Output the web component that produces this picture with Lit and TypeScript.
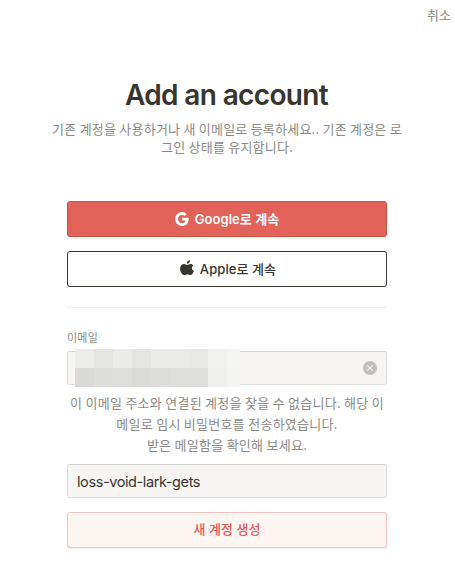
import { LitElement, html, css } from "lit";
import { customElement } from "lit/decorators.js";

const MOSAIC = [
  ["#ececeb", "#e5e5e4", "#ebebea", "#e4e4e3", "#eaeae9", "#eaeae9", "#e8e8e7", "#f0f0ef", "#f5f5f4"],
  ["#d9d9d8", "#dddddc", "#dededd", "#dadad9", "#dcdcdb", "#dededd", "#dededd", "#efefee", "#f4f4f3"],
];

@customElement("app-root")
export class AppRoot extends LitElement {
  static styles = css`
    :host {
      display: block;
      position: relative;
      width: 455px;
      height: 564px;
      overflow: hidden;
      background: #fff;
      color: #37352f;
      font-family: Inter, "Noto Sans CJK KR", sans-serif;
    }
    * { box-sizing: border-box; }
    header {
      height: 32px;
      padding-right: 4px;
      text-align: right;
      font: 13px/30px "Noto Sans CJK KR", sans-serif;
      color: #8b8a86;
    }
    h1 {
      margin: 45px 0 0;
      padding-right: 2px;
      font-size: 28px;
      line-height: 36px;
      font-weight: 600;
      letter-spacing: -0.65px;
      text-align: center;
      white-space: nowrap;
    }
    .copy {
      margin: 7px 0 0;
      padding-right: 1px;
      text-align: center;
      font: 13px/18px "Noto Sans CJK KR", sans-serif;
      letter-spacing: 0.23px;
      color: #8b8a86;
    }
    .copy span { display: block; white-space: nowrap; }
    main {
      width: 320px;
      margin: 45px 0 0 67px;
      display: flex;
      flex-direction: column;
    }
    .button {
      height: 36px;
      padding: 0 0 2px;
      border: 1px solid #37352f;
      border-radius: 3px;
      background: #fff;
      color: #37352f;
      font-family: inherit;
      font-size: 13px;
      font-weight: 500;
      letter-spacing: 0.05px;
      display: flex;
      align-items: center;
      justify-content: center;
      gap: 6px;
      white-space: nowrap;
    }
    .button svg { margin-top: 2px; }
    .google {
      background: #e16259;
      border-color: #be5643;
      color: #fff;
      font-weight: 600;
      box-shadow: 0 1px 2px rgba(15, 15, 15, 0.1);
    }
    .apple { margin-top: 14px; padding-left: 2px; letter-spacing: 0.08px; }
    .apple svg { margin-top: 0; }
    .divider { height: 1px; margin-top: 20px; background: #ededec; }
    label {
      margin-top: 20px;
      font: 11px/18px "Noto Sans CJK KR", sans-serif;
      letter-spacing: 0.2px;
      color: #8b8a86;
    }
    .field {
      position: relative;
      height: 34px;
      padding: 0 9px;
      border: 1px solid #dededd;
      border-top-color: #d2d2d1;
      border-radius: 3px;
      background: #f6f5f3;
      display: flex;
      align-items: center;
    }
    .email { margin-top: 5px; justify-content: flex-end; }
    .mosaic {
      position: absolute;
      left: 7px;
      top: -3px;
      width: 165px;
      height: 38px;
      display: grid;
      grid-template-columns: repeat(8, 19px) 13px;
      grid-template-rows: 19px 19px;
    }
    .message {
      margin-top: 7px;
      text-align: center;
      font: 13px/21px "Noto Sans CJK KR", sans-serif;
      letter-spacing: 0.27px;
      color: #8b8a86;
    }
    .message span { display: block; white-space: nowrap; }
    .code { margin-top: 9px; font-size: 14.5px; letter-spacing: -0.4px; }
    .create {
      margin-top: 14px;
      padding-bottom: 3px;
      border-color: #f2c4c3;
      background: #fdf5f2;
      color: #eb5757;
      box-shadow: 0 1px 2px rgba(15, 15, 15, 0.1);
    }
    svg { display: block; flex: none; }
  `;

  render() {
    return html`
      <header>취소</header>
      <h1>Add an account</h1>
      <p class="copy">
        <span>기존 계정을 사용하거나 새 이메일로 등록하세요.. 기존 계정은 로</span>
        <span>그인 상태를 유지합니다.</span>
      </p>
      <main>
        <button class="button google">
          <svg width="14" height="14" viewBox="0 0 14 14">
            <path fill="#fff" d="M7.1 5.7v2.7h3.6c-.4 1.6-1.7 2.6-3.6 2.6A4 4 0 0 1 3.1 7a4 4 0 0 1 4-4c1 0 1.9.35 2.6 1l2.05-2.05A6.8 6.8 0 0 0 7.1 0 7 7 0 0 0 .1 7a7 7 0 0 0 7 7c3.9 0 6.5-2.75 6.5-6.85 0-.5-.05-1-.15-1.45z"/>
          </svg>
          <span>Google로 계속</span>
        </button>
        <button class="button apple">
          <svg width="14" height="16" viewBox="0 0 14 16">
            <path fill="#37352f" d="M10 .2c.15 1.9-1.35 3.55-3.2 3.5C6.7 1.85 8.2.35 10 .2zM13.4 5.6c-2.2 1.3-1.9 4.3.5 5.3-.6 1.6-1.9 4.2-3.5 4.2-1.2 0-1.6-.7-3.1-.7s-1.9.7-3 .7C2.1 15.1.1 11.7.1 8.8.1 5.8 1.9 4 4 4c1.3 0 2.3.9 3.2.9.8 0 1.9-1 3.5-1 1.1 0 2.1.6 2.7 1.7z"/>
          </svg>
          <span>Apple로 계속</span>
        </button>
        <div class="divider"></div>
        <label>이메일</label>
        <div class="field email">
          <div class="mosaic">
            ${MOSAIC.flat().map((c) => html`<i style="background:${c}"></i>`)}
          </div>
          <svg width="14" height="14" viewBox="0 0 14 14">
            <circle cx="7" cy="7" r="7" fill="#c1c0be"/>
            <path d="M4.3 4.3l5.4 5.4M9.7 4.3L4.3 9.7" stroke="#f6f5f3" stroke-width="1.1"/>
          </svg>
        </div>
        <div class="message">
          <span>이 이메일 주소와 연결된 계정을 찾을 수 없습니다. 해당 이</span>
          <span>메일로 임시 비밀번호를 전송하였습니다.</span>
          <span>받은 메일함을 확인해 보세요.</span>
        </div>
        <div class="field code">loss-void-lark-gets</div>
        <button class="button create">새 계정 생성</button>
      </main>
    `;
  }
}
